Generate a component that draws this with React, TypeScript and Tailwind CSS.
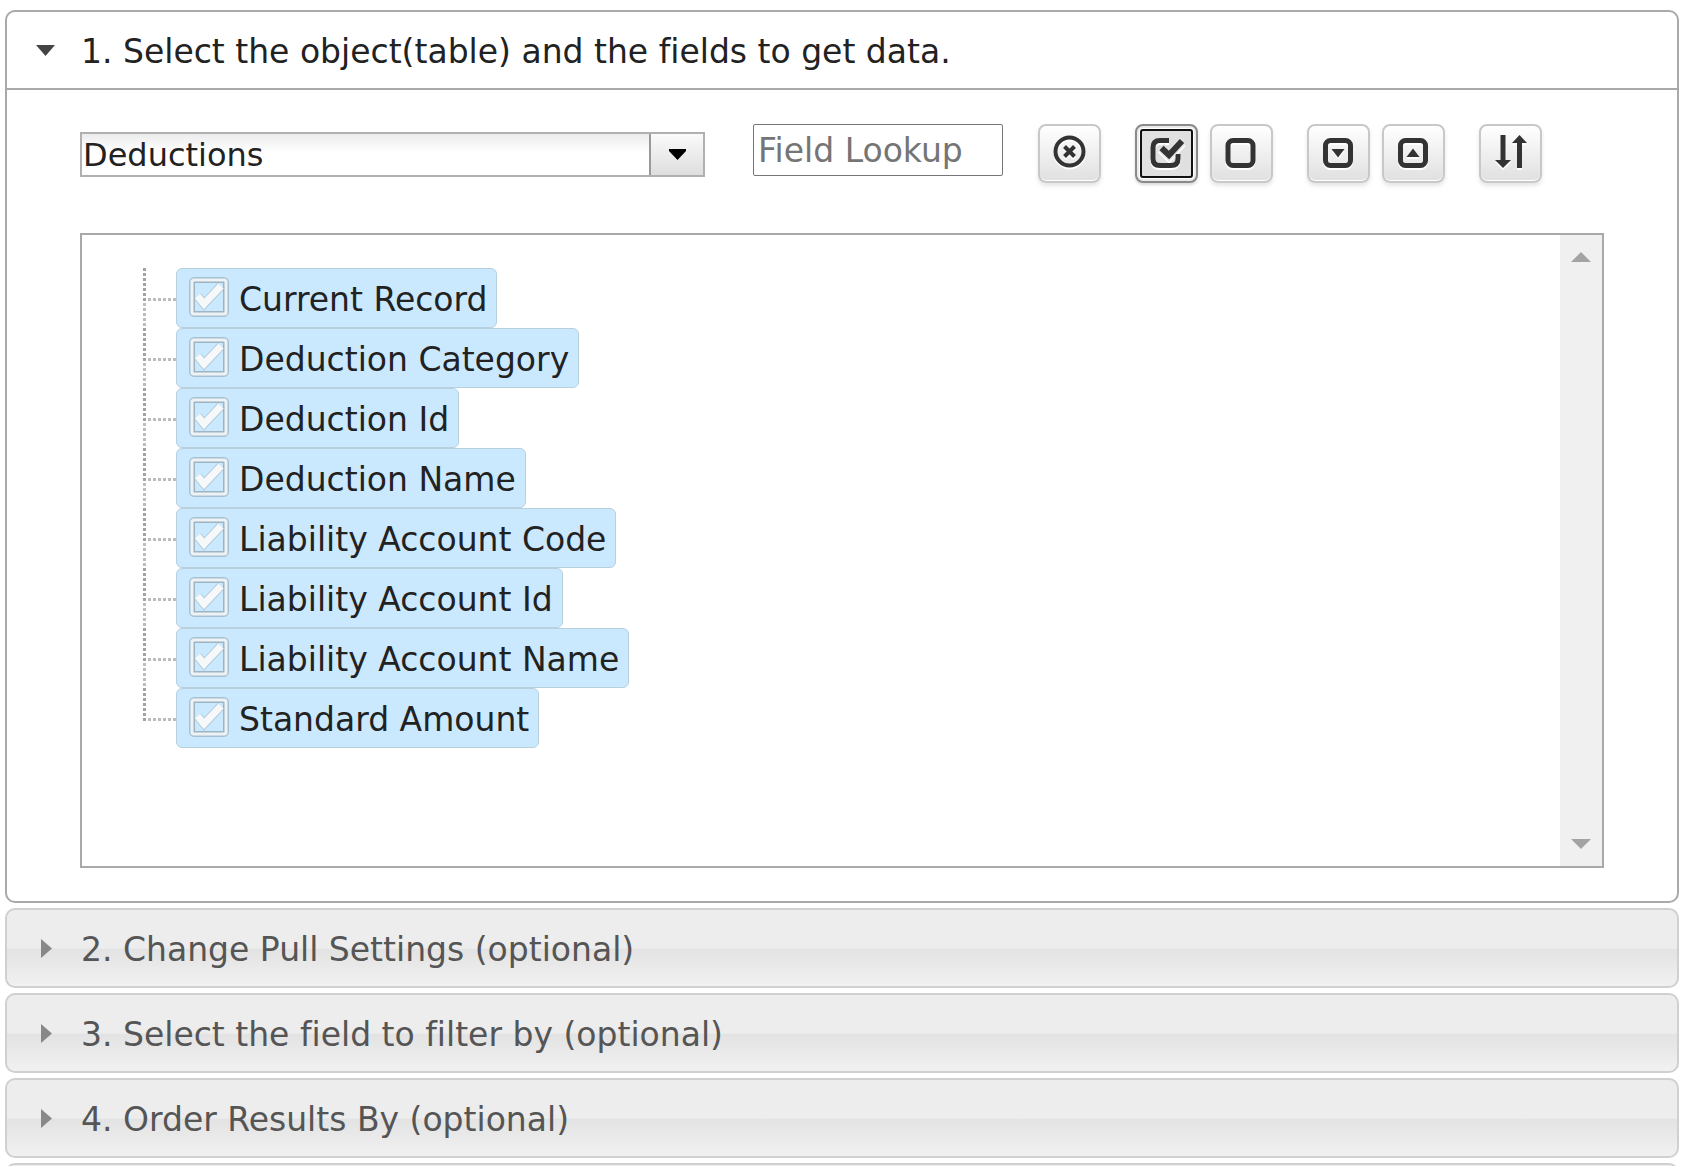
import { useState } from 'react'
import type { ReactNode } from 'react'

const fields = [
  'Current Record',
  'Deduction Category',
  'Deduction Id',
  'Deduction Name',
  'Liability Account Code',
  'Liability Account Id',
  'Liability Account Name',
  'Standard Amount',
]

const steps = [
  '2. Change Pull Settings (optional)',
  '3. Select the field to filter by (optional)',
  '4. Order Results By (optional)',
]

function ToolButton({ label, active, children }: { label: string; active?: boolean; children: ReactNode }) {
  const look = active
    ? 'border-[#8a8a8a] bg-[#e0e0e0] outline-2 -outline-offset-7 outline-[#111] shadow-[inset_0_0_0_2px_#ebebeb,inset_0_0_0_3px_#fff,0_2px_3px_rgba(0,0,0,0.15)]'
    : 'border-[#c8c8c8] bg-linear-to-b from-white to-[#e0e0e0] shadow-[inset_0_-1px_0_#fff,0_3px_4px_rgba(0,0,0,0.1)]'

  return (
    <button
      type="button"
      aria-label={label}
      className={`flex h-[59px] w-[63px] items-start justify-center rounded-lg border-2 pt-2 ${look}`}
    >
      <svg viewBox="0 0 36 36" className="size-9 text-[#333] drop-shadow-[0_2px_0_#fff]" fill="none" stroke="currentColor">
        {children}
      </svg>
    </button>
  )
}

function StepHeader({ title }: { title?: string }) {
  return (
    <h3>
      <button
        type="button"
        aria-expanded="false"
        className="flex h-20 w-full items-center rounded-[10px] border-2 border-[#d0d0d0] bg-linear-to-b from-[#ededed] from-50% via-[#e3e3e3] via-52% to-[#f1f1f1] pl-[34px] text-left text-[#555]"
      >
        <svg viewBox="0 0 20 20" className="size-5 text-[#888]" fill="currentColor">
          <path d="M0 1 11 10.500 0 20z" />
        </svg>
        <span className="pt-1 pl-5">{title}</span>
      </button>
    </h3>
  )
}

function FieldRow({ name, last }: { name: string; last: boolean }) {
  const [checked, setChecked] = useState(true)

  return (
    <li className="flex h-[60px]">
      {/* Dotted connector */}
      <svg viewBox="0 0 33 60" className="h-[60px] w-[33px] shrink-0" strokeWidth="3" strokeDasharray="3 2">
        <path d="M1.500 0V33" stroke="#a3a3a3" />
        {!last && <path d="M1.500 35V60" stroke="#bdbdbd" />}
        <path d="M5 31.500H33" stroke="#bdbdbd" />
      </svg>
      <label className="flex items-center rounded-md border border-[#b8d0de] bg-[#cbe9fe] pr-[9px] pl-3">
        <span className="grid self-start pt-2">
          <input
            type="checkbox"
            checked={checked}
            onChange={() => setChecked(!checked)}
            className="size-10 appearance-none [grid-area:1/1]"
          />
          <svg viewBox="0 0 40 40" className="pointer-events-none size-10 [grid-area:1/1]" fill="none">
            <rect x="1.500" y="1.500" width="37" height="37" rx="4" stroke="#8fa6b5" strokeWidth="3" opacity="0.6" />
            <rect x="5" y="5" width="30" height="30" stroke="#9db4c2" strokeWidth="2" />
            <rect x="3" y="3" width="34" height="34" rx="2" stroke="#eef2f5" strokeWidth="3" />
            {checked && (
              <>
                <path d="M8.500 19 15 27 32 9" stroke="#a3bccb" strokeWidth="9" opacity="0.7" />
                <path d="M8.500 19 15 27 32 9" stroke="#f7f8f9" strokeWidth="7" />
              </>
            )}
          </svg>
        </span>
        <span className="pt-1 pl-2.5 whitespace-nowrap">{name}</span>
      </label>
    </li>
  )
}

function App() {
  return (
    <main className="flex h-screen flex-col gap-[5px] overflow-hidden bg-white pt-2.5 pr-1.5 pl-[5px] font-['DejaVu_Sans',sans-serif] text-[33px] leading-10 text-[#222] [font-variant-ligatures:none] *:shrink-0">
      {/* Step 1 */}
      <section className="rounded-[10px] border-2 border-[#a9a9a9]">
        <h3 className="border-b-2 border-[#a9a9a9]">
          <button type="button" aria-expanded="true" className="flex h-[76px] w-full items-center pl-[29px] text-left">
            <svg viewBox="0 0 20 20" className="size-5 text-[#444]" fill="currentColor">
              <path d="M0 5H19L9.500 16z" />
            </svg>
            <span className="pt-1 pl-[25px]">1. Select the object(table) and the fields to get data.</span>
          </button>
        </h3>

        <div className="px-[73px] pt-[34px] pb-[33px]">
          {/* Toolbar */}
          <div className="flex items-start">
            <div className="relative mt-2 w-[625px]">
              <select
                aria-label="Object"
                className="h-[45px] w-full appearance-none border-2 border-[#b0b0b0] bg-linear-to-b from-[#ececec] to-white to-45% pl-px text-[32px] leading-10"
              >
                <option>Deductions</option>
              </select>
              <span className="pointer-events-none absolute inset-y-0.5 right-0.5 flex w-[54px] items-center justify-center border-l-2 border-[#999] bg-linear-to-b from-[#fafafa] to-[#dedede]">
                <svg viewBox="0 0 17 11" className="h-[11px] w-[17px]">
                  <path d="M0 0H17V2L8.500 11 0 2z" fill="#000" />
                </svg>
              </span>
            </div>

            <input
              type="text"
              aria-label="Field Lookup"
              placeholder="Field Lookup"
              className="ml-12 h-[52px] w-[250px] rounded-xs border border-[#767676] px-1 placeholder:text-[#757575]"
            />

            <div className="ml-[35px] flex gap-[34px]">
              <ToolButton label="Clear lookup">
                <circle cx="17.500" cy="17.500" r="14" strokeWidth="4" />
                <path d="M12.500 12.500 22.500 22.500M22.500 12.500 12.500 22.500" strokeWidth="4" />
              </ToolButton>
              <div className="flex gap-3">
                <ToolButton label="Select all" active>
                  <path d="M20 6.500H11Q4 6.500 4 13.500V24.500Q4 31.500 11 31.500H22Q29 31.500 29 24.500V20" strokeWidth="5" />
                  <path d="M12 13 20 21 35 5" stroke="#e2e2e2" strokeWidth="9" />
                  <path d="M12.500 14 20 21 33 7" strokeWidth="6" />
                </ToolButton>
                <ToolButton label="Select none">
                  <rect x="4" y="6.500" width="25" height="25" rx="5" strokeWidth="5" />
                </ToolButton>
              </div>
              <div className="flex gap-3">
                <ToolButton label="Expand all">
                  <rect x="4.500" y="6.500" width="25" height="25" rx="5" strokeWidth="5" />
                  <path d="M10.500 15H23.500L17 23.500z" fill="currentColor" stroke="none" />
                </ToolButton>
                <ToolButton label="Collapse all">
                  <rect x="4.500" y="6.500" width="25" height="25" rx="5" strokeWidth="5" />
                  <path d="M10.500 23H23.500L17 14.500z" fill="currentColor" stroke="none" />
                </ToolButton>
              </div>
              <ToolButton label="Sort">
                <path d="M10 1V27M26.500 9V34" strokeWidth="5" />
                <path d="M2 26H18L10 34z M19 9H34L26.500 1z" fill="currentColor" stroke="none" />
              </ToolButton>
            </div>
          </div>

          {/* Field tree */}
          <div className="mt-[50px] flex border-2 border-[#a9a9a9]">
            <ul className="flex-1 pt-[33px] pb-[118px] pl-[61px]">
              {fields.map((name, i) => (
                <FieldRow key={name} name={name} last={i === fields.length - 1} />
              ))}
            </ul>
            <div className="flex w-[42px] flex-col items-center justify-between bg-[#f0f0f0] py-[17px] text-[#a3a3a3]">
              <svg viewBox="0 0 20 10" className="h-2.5 w-5" fill="currentColor">
                <path d="M0 10 10 0 20 10z" />
              </svg>
              <svg viewBox="0 0 20 10" className="h-2.5 w-5" fill="currentColor">
                <path d="M0 0H20L10 10z" />
              </svg>
            </div>
          </div>
        </div>
      </section>

      {/* Collapsed steps */}
      {steps.map((title) => (
        <StepHeader key={title} title={title} />
      ))}
      <StepHeader />
    </main>
  )
}

export default App
